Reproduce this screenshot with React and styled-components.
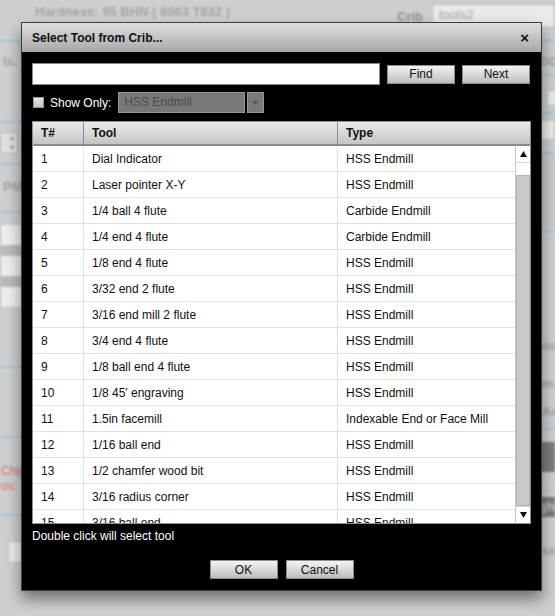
import React from "react";
import styled, { createGlobalStyle } from "styled-components";

const GlobalStyle = createGlobalStyle`
  html, body {
    margin: 0;
    padding: 0;
    background: #cdd0d0;
    font-family: "Liberation Sans", Arial, sans-serif;
    font-size: 12px;
  }
  #root {
    width: 555px;
    height: 616px;
    overflow: hidden;
    position: relative;
  }
`;

const tools = [
  [1, "Dial Indicator", "HSS Endmill"],
  [2, "Laser pointer X-Y", "HSS Endmill"],
  [3, "1/4 ball 4 flute", "Carbide Endmill"],
  [4, "1/4 end 4 flute", "Carbide Endmill"],
  [5, "1/8 end 4 flute", "HSS Endmill"],
  [6, "3/32 end 2 flute", "HSS Endmill"],
  [7, "3/16 end mill 2 flute", "HSS Endmill"],
  [8, "3/4 end 4 flute", "HSS Endmill"],
  [9, "1/8 ball end 4 flute", "HSS Endmill"],
  [10, "1/8 45' engraving", "HSS Endmill"],
  [11, "1.5in facemill", "Indexable End or Face Mill"],
  [12, "1/16 ball end", "HSS Endmill"],
  [13, "1/2 chamfer wood bit", "HSS Endmill"],
  [14, "3/16 radius corner", "HSS Endmill"],
  [15, "3/16 ball end", "HSS Endmill"],
  [16, "1/4 end 2 flute", "HSS Endmill"],
];

const App = () => {
  return (
    <>
      <GlobalStyle />
      <Page>
        <TopBar>
          <TopFields>
            <Field w={28} h={6} />
            <Field w={215} h={6} />
            <Field w={70} h={6} />
            <Field w={120} h={6} />
          </TopFields>
          <TopInfo>
            <Hardness>Hardness: 95 BHN ( 6063 T832 )</Hardness>
            <CribGroup>
              <CribLabel>Crib</CribLabel>
              <CribInput>tools2</CribInput>
            </CribGroup>
          </TopInfo>
        </TopBar>
        <Columns>
          <EdgeCol>
            <Gap h={18} />
            <Line />
            <Gap h={12} />
            <EdgeText>ls.</EdgeText>
            <Gap h={51} />
            <Line />
            <Gap h={9} />
            <Spinner>
              <span>▴</span>
              <span>▾</span>
            </Spinner>
            <Gap h={9} />
            <Line />
            <Gap h={14} />
            <EdgeText>PM</EdgeText>
            <Gap h={16} />
            <Line />
            <Gap h={11} />
            <EdgeBox h={20} />
            <Band />
            <EdgeBox h={20} />
            <Band />
            <EdgeBox h={20} />
            <Gap h={58} />
            <Line />
            <Gap h={68} />
            <Line />
            <Gap h={26} />
            <RedText>
              Chip
              <br />
              os:
            </RedText>
            <Gap h={20} />
            <Line />
            <Gap h={25} />
            <EdgeBox h={20} inset />
          </EdgeCol>
          <EdgeCol right>
            <Gap h={18} />
            <Line />
            <Gap h={12} />
            <EdgeText>00</EdgeText>
            <Gap h={4} />
            <Line />
            <Gap h={14} />
            <EdgeBox h={14} w={8} inset />
            <Gap h={6} />
            <Line />
            <Gap h={6} />
            <EdgeBox h={18} />
            <Gap h={12} />
            <FramedBox />
            <Gap h={4} />
            <Line />
            <Gap h={106} />
            <EdgeText>oa</EdgeText>
            <Gap h={22} />
            <EdgeText>m.</EdgeText>
            <Gap h={12} />
            <EdgeText>Ad</EdgeText>
            <Gap h={8} />
            <Line />
            <Gap h={12} />
            <DarkBand h={30} />
            <Gap h={25} />
            <DarkBand h={20}>gh</DarkBand>
            <Gap h={26} />
            <EdgeText>se</EdgeText>
          </EdgeCol>
        </Columns>
      </Page>

      <Dialog>
        <TitleBar>
          <span>Select Tool from Crib...</span>
          <Close>×</Close>
        </TitleBar>
        <Body>
          <SearchRow>
            <SearchInput />
            <Button w={68}>Find</Button>
            <Button w={68}>Next</Button>
          </SearchRow>
          <FilterRow>
            <Check />
            <FilterLabel>Show Only:</FilterLabel>
            <Select>HSS Endmill</Select>
            <SelectArrow>
              <svg width="7" height="4" viewBox="0 0 7 4">
                <path d="M0 0 L7 0 L3.5 4 Z" fill="#555" />
              </svg>
            </SelectArrow>
          </FilterRow>
          <Table>
            <HeadRow>
              <HeadCell w={51}>T#</HeadCell>
              <HeadCell w={254}>Tool</HeadCell>
              <HeadCell last>Type</HeadCell>
            </HeadRow>
            <TableBody>
              <Rows>
                {tools.map(([n, name, type]) => (
                  <Row key={n}>
                    <Cell w={51}>{n}</Cell>
                    <Cell w={254}>{name}</Cell>
                    <Cell last>{type}</Cell>
                  </Row>
                ))}
              </Rows>
              <ScrollBar>
                <ArrowBtn>
                  <svg width="7" height="6" viewBox="0 0 7 6">
                    <path d="M3.5 0 L7 6 L0 6 Z" fill="#111" />
                  </svg>
                </ArrowBtn>
                <Track>
                  <Thumb />
                </Track>
                <ArrowBtn>
                  <svg width="7" height="6" viewBox="0 0 7 6">
                    <path d="M0 0 L7 0 L3.5 6 Z" fill="#111" />
                  </svg>
                </ArrowBtn>
              </ScrollBar>
            </TableBody>
          </Table>
          <Hint>Double click will select tool</Hint>
          <Actions>
            <Button w={68}>OK</Button>
            <Button w={68}>Cancel</Button>
          </Actions>
        </Body>
      </Dialog>
    </>
  );
};

export default App;

/* blurred page behind the dialog */
const Page = styled.div`
  width: 555px;
  height: 616px;
  display: flex;
  flex-direction: column;
  filter: blur(0.8px);
  background: #cdd0d0;
`;

const TopBar = styled.div`
  height: 22px;
  display: flex;
  flex-direction: column;
`;

const TopFields = styled.div`
  height: 6px;
  display: flex;
  gap: 8px;
  padding-left: 58px;
  overflow: hidden;
  & > div:first-child {
    margin-left: -58px;
  }
  & > div:last-child {
    margin-left: auto;
  }
`;

const TopInfo = styled.div`
  display: flex;
  justify-content: space-between;
  align-items: flex-start;
`;

const Hardness = styled.span`
  color: #a2a4a4;
  font-size: 13px;
  font-weight: bold;
  margin-left: 35px;
  margin-top: 0;
  line-height: 24px;
  margin-top: -6px;
  padding-top: 6px;
`;

const CribGroup = styled.div`
  display: flex;
  align-items: center;
  gap: 9px;
  margin-top: 4px;
`;

const CribLabel = styled.span`
  color: #8e9090;
  font-size: 13px;
  font-weight: bold;
`;

const CribInput = styled.div`
  width: 115px;
  height: 22px;
  background: #e9ebeb;
  border: 1px solid #b4b8b8;
  color: #a0a2a2;
  padding-left: 6px;
  line-height: 20px;
  font-size: 13px;
`;

const Field = styled.div`
  width: ${(p) => p.w}px;
  height: ${(p) => p.h || 8}px;
  background: #e4e6e6;
  border: 1px solid #b4b8b8;
  border-top: none;
  flex-shrink: 0;
`;

const Columns = styled.div`
  flex: 1;
  display: flex;
  justify-content: space-between;
`;

const EdgeCol = styled.div`
  width: ${(p) => (p.right ? 16 : 24)}px;
  display: flex;
  flex-direction: column;
  overflow: hidden;
  padding-left: ${(p) => (p.right ? 2 : 0)}px;
`;

const Gap = styled.div`
  height: ${(p) => p.h}px;
  flex-shrink: 0;
`;

const Line = styled.div`
  height: 2px;
  flex-shrink: 0;
  background: #a9c3d5;
`;

const EdgeText = styled.span`
  color: #a0a2a2;
  font-size: 13px;
  font-weight: bold;
  line-height: 16px;
  white-space: nowrap;
  padding-left: 3px;
`;

const Spinner = styled.div`
  width: 18px;
  height: 22px;
  box-sizing: border-box;
  background: #e0e2e2;
  border: 1px solid #b0b4b4;
  display: flex;
  flex-direction: column;
  align-items: flex-end;
  padding-right: 3px;
  font-size: 8px;
  line-height: 10px;
  color: #8a8c8c;
`;

const EdgeBox = styled.div`
  height: ${(p) => p.h}px;
  width: ${(p) => (p.w ? `${p.w}px` : "auto")};
  flex-shrink: 0;
  margin-left: ${(p) => (p.inset ? 8 : 0)}px;
  background: #eceeee;
  border: 1px solid #bcc0c0;
`;

const Band = styled.div`
  height: 9px;
  flex-shrink: 0;
  background: #b9bcbc;
`;

const FramedBox = styled.div`
  height: 72px;
  flex-shrink: 0;
  border-left: 2px solid #aac3d5;
  border-top: 2px solid #aac3d5;
  background: #c8cccc;
`;

const DarkBand = styled.div`
  height: ${(p) => p.h}px;
  flex-shrink: 0;
  background: #7b7d7e;
  color: #c8caca;
  font-weight: bold;
  font-size: 13px;
  line-height: ${(p) => p.h}px;
`;

const RedText = styled.div`
  color: #d86a6a;
  font-size: 12px;
  line-height: 15px;
  padding-left: 1px;
`;

/* dialog */
const Dialog = styled.div`
  position: absolute;
  left: 21px;
  top: 22px;
  width: 521px;
  height: 569px;
  box-sizing: border-box;
  border: 1px solid #3c3c3c;
  background: #000;
  box-shadow: 0 8px 14px rgba(0, 0, 0, 0.45);
  display: flex;
  flex-direction: column;
`;

const TitleBar = styled.div`
  height: 29px;
  display: flex;
  align-items: center;
  justify-content: space-between;
  padding: 0 12px 0 10px;
  background: linear-gradient(#dedede, #a8a8a8);
  color: #111;
  font-weight: bold;
  font-size: 12px;
`;

const Close = styled.span`
  font-size: 15px;
  font-weight: bold;
  line-height: 1;
`;

const Body = styled.div`
  flex: 1;
  display: flex;
  flex-direction: column;
  padding: 11px 10px 0 10px;
`;

const SearchRow = styled.div`
  display: flex;
  align-items: center;
  gap: 7px;
  height: 22px;
`;

const SearchInput = styled.div`
  width: 348px;
  height: 22px;
  box-sizing: border-box;
  background: #fff;
  border: 1px solid #8a8a8a;
`;

const Button = styled.div`
  width: ${(p) => p.w}px;
  height: 19px;
  box-sizing: border-box;
  display: flex;
  align-items: center;
  justify-content: center;
  border: 1px solid #8c8c8c;
  background: linear-gradient(#f4f4f4, #bdbdbd);
  color: #111;
  font-size: 12px;
`;

const FilterRow = styled.div`
  display: flex;
  align-items: center;
  margin-top: 7px;
  height: 21px;
`;

const Check = styled.div`
  width: 11px;
  height: 11px;
  margin-left: 1px;
  box-sizing: border-box;
  border: 1px solid #999;
  background: linear-gradient(#e6e6e6, #c4c4c4);
`;

const FilterLabel = styled.span`
  color: #fff;
  font-size: 12px;
  margin-left: 6px;
  margin-right: 7px;
`;

const Select = styled.div`
  width: 127px;
  height: 21px;
  box-sizing: border-box;
  background: #787878;
  border: 1px solid #969696;
  color: #4c4c4c;
  padding-left: 5px;
  line-height: 19px;
  font-size: 12px;
`;

const SelectArrow = styled.div`
  width: 17px;
  height: 21px;
  margin-left: 2px;
  box-sizing: border-box;
  background: #7a7a7a;
  border: 1px solid #969696;
  display: flex;
  align-items: center;
  justify-content: center;
`;

const Table = styled.div`
  margin-top: 8px;
  height: 403px;
  box-sizing: border-box;
  border: 1px solid #8e8e8e;
  background: #fff;
  display: flex;
  flex-direction: column;
  overflow: hidden;
`;

const HeadRow = styled.div`
  height: 22px;
  flex-shrink: 0;
  display: flex;
  background: linear-gradient(#ececec, #c4c4c4);
  border-bottom: 2px solid #8a8a8a;
`;

const HeadCell = styled.div`
  width: ${(p) => (p.w ? `${p.w}px` : "auto")};
  flex: ${(p) => (p.last ? 1 : "none")};
  box-sizing: border-box;
  padding-left: 8px;
  display: flex;
  align-items: center;
  font-weight: bold;
  color: #111;
  border-right: ${(p) => (p.last ? "none" : "1px solid #8e8e8e")};
`;

const TableBody = styled.div`
  flex: 1;
  display: flex;
  min-height: 0;
`;

const Rows = styled.div`
  flex: 1;
  overflow: hidden;
`;

const Row = styled.div`
  height: 26px;
  display: flex;
  box-sizing: border-box;
  border-bottom: 1px solid #e2e2e2;
`;

const Cell = styled.div`
  width: ${(p) => (p.w ? `${p.w}px` : "auto")};
  flex: ${(p) => (p.last ? 1 : "none")};
  box-sizing: border-box;
  padding-left: 8px;
  display: flex;
  align-items: center;
  color: #111;
  font-size: 12px;
  border-right: ${(p) => (p.last ? "none" : "1px solid #e2e2e2")};
`;

const ScrollBar = styled.div`
  width: 14px;
  display: flex;
  flex-direction: column;
  border-left: 1px solid #c8c8c8;
`;

const ArrowBtn = styled.div`
  height: 16px;
  flex-shrink: 0;
  display: flex;
  align-items: center;
  justify-content: center;
  background: #fff;
  border-bottom: 1px solid #d6d6d6;
  &:last-child {
    border-bottom: none;
    border-top: 1px solid #d6d6d6;
  }
`;

const Track = styled.div`
  flex: 1;
  background: #fff;
  padding-top: 12px;
  display: flex;
`;

const Thumb = styled.div`
  flex: 1;
  background: #c9c9c9;
  border: 1px solid #b4b4b4;
`;

const Hint = styled.div`
  color: #fff;
  font-size: 12px;
  line-height: 14px;
  margin-top: 5px;
`;

const Actions = styled.div`
  display: flex;
  justify-content: center;
  gap: 8px;
  margin-top: 17px;
`;
